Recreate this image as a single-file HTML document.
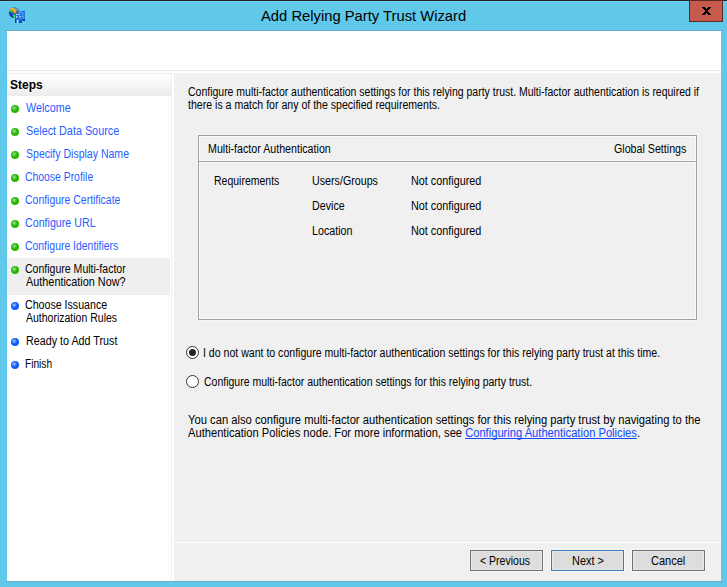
<!DOCTYPE html>
<html><head><meta charset="utf-8">
<style>

html,body{margin:0;padding:0;}
body{width:727px;height:587px;position:relative;overflow:hidden;background:#60c9ea;font-family:"Liberation Sans",sans-serif;}
.abs{position:absolute;}
#topline{left:0;top:0;width:727px;height:1px;background:#2a2222;}
#topline2{left:0;top:1px;width:727px;height:1px;background:#63d4f7;}
#close{left:689px;top:0;width:32px;height:20px;background:#c75a4c;border:1px solid #5c2a24;}
#title{left:0;top:5px;width:727px;text-align:center;font-size:15px;color:#111;letter-spacing:-0.13px;white-space:nowrap;}
#client{left:7px;top:31px;width:714px;height:550px;background:#fff;}
#cborder-t{left:6px;top:30px;width:716px;height:1px;background:#6aa9c6;}
#cborder-b{left:6px;top:581px;width:716px;height:1px;background:#6aadcc;}
#cborder-l{left:6px;top:31px;width:1px;height:550px;background:#57c5eb;}
#cborder-r{left:721px;top:31px;width:1px;height:550px;background:#5ec8ea;}
#hdrline{left:7px;top:70px;width:714px;height:1px;background:#e8e8e8;}
#lefthdr{left:7px;top:73px;width:164px;height:22px;background:linear-gradient(#ffffff,#ececec);border-top:1px solid #ececec;}
#leftline{left:171px;top:73px;width:1px;height:508px;background:#f0f0f0;}
#right{left:174px;top:73px;width:547px;height:508px;background:#f0f0f0;}
.t{position:absolute;white-space:nowrap;font-size:11px;line-height:13px;color:#000;}
.step{position:absolute;left:26px;white-space:nowrap;font-size:11px;line-height:13px;color:#2f5cff;letter-spacing:-0.25px;}
.dot{position:absolute;left:11px;width:8px;height:8px;border-radius:50%;}
.g{background:radial-gradient(circle at 40% 38%,#a8e2a0 0,#5ccc40 22%,#22ae00 48%,#2cc000 70%,#4ada00 100%);}
.b{background:radial-gradient(circle at 40% 38%,#b0d4ff 0,#4a8cff 22%,#0a50f0 48%,#1262ff 70%,#2a78ff 100%);}
#hl{left:7px;top:258px;width:163px;height:37px;background:#efefef;}
#box{left:198px;top:135px;width:497px;height:183px;border:1px solid #a0a0a0;box-shadow:inset 1px 1px 0 #fafafa, inset -1px -1px 0 #fafafa, 0 0 0 1px #f6f6f6;}
#boxsep{left:199px;top:161px;width:497px;height:1px;background:#a0a0a0;box-shadow:0 -1px 0 #fafafa, 0 1px 0 #fafafa;}
.radio{position:absolute;left:186px;width:11px;height:11px;border:1px solid #333;border-radius:50%;background:#fff;}
.radio.on::after{content:"";position:absolute;left:2px;top:2px;width:7px;height:7px;border-radius:50%;background:#222;}
#sep{left:174px;top:542px;width:547px;height:1px;background:#fff;}
.btn{position:absolute;top:550px;width:71px;height:19px;border:1px solid #707070;background:#dddddd;box-shadow:inset 0 0 0 1px #e9e9e9, 0 0 0 1px #f8f8f8;}
a{color:#1448ff;text-decoration:underline;text-decoration-skip-ink:none;}

.tx{position:absolute;white-space:nowrap;}

</style></head><body>

<div class="abs" id="topline"></div>
<div class="abs" id="topline2"></div>
<div class="abs" id="close"></div>
<svg class="abs" style="left:689px;top:0" width="34" height="22" shape-rendering="crispEdges"><g fill="#000">
<rect x="13" y="7" width="3" height="1"/><rect x="19" y="7" width="3" height="1"/>
<rect x="14" y="8" width="3" height="1"/><rect x="18" y="8" width="3" height="1"/>
<rect x="15" y="9" width="5" height="1"/>
<rect x="16" y="10" width="3" height="2"/>
<rect x="15" y="12" width="5" height="1"/>
<rect x="14" y="13" width="3" height="1"/><rect x="18" y="13" width="3" height="1"/>
<rect x="13" y="14" width="3" height="1"/><rect x="19" y="14" width="3" height="1"/>
</g></svg>
<svg class="abs" style="left:6px;top:4px" width="24" height="22">
<defs><radialGradient id="gl" cx="0.35" cy="0.6" r="0.7"><stop offset="0" stop-color="#1a5ad0"/><stop offset="0.6" stop-color="#0a2a9a"/><stop offset="1" stop-color="#2a80d8"/></radialGradient></defs>
<circle cx="8.3" cy="8.6" r="5.4" fill="url(#gl)"/>
<path d="M7.5 3.4 Q11.5 3.6 13 7 L12 8 Q10.5 5 7.5 4.6 Z" fill="#3aa8e8"/>
<path d="M3 5.8 Q4.5 3.6 7.5 3.9 L9.2 5.2 L10.6 5 L10.5 9.3 L6.8 9 L8 7.9 Q6.5 6.6 4.2 7.8 L3.1 7.4 Z" fill="#f4a418"/><path d="M5 5 Q7 4.6 8.8 6.2" stroke="#ffd890" stroke-width="0.7" fill="none"/>
<path d="M4.3 5.8 L6.4 5.6 L6.4 8.6 L4.5 8.4 Z" fill="#20d030"/>
<path d="M6.6 10.2 L9.4 10.4 L9.4 13.9 L7.5 13.6 Z" fill="#20e040"/>
<rect x="12" y="6.9" width="6.9" height="10" fill="#1a6ed8"/>
<rect x="12.6" y="7.6" width="1.2" height="0.9" fill="#d8ecff"/><rect x="14.6" y="7.6" width="1.6" height="0.9" fill="#c8e0ff"/>
<rect x="16.5" y="9.2" width="1" height="1.2" fill="#d8ecff"/><rect x="16.5" y="11.6" width="1" height="1.2" fill="#c8e0ff"/><rect x="16.5" y="13.6" width="1" height="1" fill="#d8ecff"/>
<rect x="16.7" y="15" width="2.1" height="1.9" fill="#0030a8"/>
<rect x="9" y="9.2" width="6.9" height="9.5" fill="#1c7ae2"/>
<rect x="10.1" y="9.8" width="1.2" height="1.1" fill="#f0f8ff"/><rect x="12.4" y="9.8" width="1.5" height="1.1" fill="#e0f0ff"/>
<rect x="10.1" y="12" width="1.2" height="1.5" fill="#f0f8ff"/><rect x="13.5" y="12" width="1.2" height="1.5" fill="#d0e8ff"/>
<rect x="9" y="15" width="1.1" height="3.7" fill="#0030a8"/>
<rect x="10.9" y="16.1" width="1.5" height="2.6" fill="#d8ecff"/>
<rect x="13.1" y="16.9" width="2.7" height="1.8" fill="#0030a8"/>
</svg>
<div class="abs" id="cborder-t"></div>
<div class="abs" id="cborder-b"></div>
<div class="abs" id="cborder-l"></div>
<div class="abs" id="cborder-r"></div>
<div class="abs" id="client"></div>
<div class="abs" id="hdrline"></div>
<div class="abs" id="lefthdr"></div>
<div class="abs" id="leftline"></div>
<div class="abs" id="right"></div>
<div class="abs" id="hl"></div>

<div class="dot g" style="top:105px"></div>
<div class="dot g" style="top:128px"></div>
<div class="dot g" style="top:151px"></div>
<div class="dot g" style="top:174px"></div>
<div class="dot g" style="top:197px"></div>
<div class="dot g" style="top:220px"></div>
<div class="dot g" style="top:243px"></div>
<div class="dot g" style="top:266px"></div>
<div class="dot b" style="top:302px"></div>
<div class="dot b" style="top:338px"></div>
<div class="dot b" style="top:361px"></div>


<div class="abs" id="box"></div>
<div class="abs" id="boxsep"></div>

<div class="radio on" style="top:346px"></div>
<div class="radio" style="top:375px"></div>


<div class="abs" id="sep"></div>
<div class="btn" style="left:470px"></div>
<div class="btn" style="left:551px;border-color:#3a7bb8"></div>
<div class="btn" style="left:632px"></div>

<div class="tx" id="t_title" style="left:261.05px;top:7px;font-size:15px;line-height:18px;color:#000;transform:scaleX(0.9847);transform-origin:0 0;">Add Relying Party Trust Wizard</div>
<div class="tx" id="t_steps" style="left:9.85px;top:79px;font-size:12px;line-height:13px;color:#000;font-weight:bold;transform:scaleX(0.9988);transform-origin:0 0;">Steps</div>
<div class="tx" id="t_s1" style="left:26.27px;top:102px;font-size:12px;line-height:13px;color:#1f5eff;transform:scaleX(0.8961);transform-origin:0 0;">Welcome</div>
<div class="tx" id="t_s2" style="left:25.89px;top:125px;font-size:12px;line-height:13px;color:#1f5eff;transform:scaleX(0.9012);transform-origin:0 0;">Select Data Source</div>
<div class="tx" id="t_s3" style="left:25.99px;top:148px;font-size:12px;line-height:13px;color:#1f5eff;transform:scaleX(0.8774);transform-origin:0 0;">Specify Display Name</div>
<div class="tx" id="t_s4" style="left:25.46px;top:171px;font-size:12px;line-height:13px;color:#1f5eff;transform:scaleX(0.8661);transform-origin:0 0;">Choose Profile</div>
<div class="tx" id="t_s5" style="left:25.46px;top:194px;font-size:12px;line-height:13px;color:#1f5eff;transform:scaleX(0.8720);transform-origin:0 0;">Configure Certificate</div>
<div class="tx" id="t_s6" style="left:25.40px;top:217px;font-size:12px;line-height:13px;color:#1f5eff;transform:scaleX(0.8898);transform-origin:0 0;">Configure URL</div>
<div class="tx" id="t_s7" style="left:25.46px;top:240px;font-size:12px;line-height:13px;color:#1f5eff;transform:scaleX(0.8687);transform-origin:0 0;">Configure Identifiers</div>
<div class="tx" id="t_s8a" style="left:25.40px;top:263px;font-size:12px;line-height:13px;color:#000;transform:scaleX(0.8779);transform-origin:0 0;">Configure Multi-factor</div>
<div class="tx" id="t_s8b" style="left:26.01px;top:276px;font-size:12px;line-height:13px;color:#000;transform:scaleX(0.9052);transform-origin:0 0;">Authentication Now?</div>
<div class="tx" id="t_s9a" style="left:25.40px;top:299px;font-size:12px;line-height:13px;color:#000;transform:scaleX(0.8855);transform-origin:0 0;">Choose Issuance</div>
<div class="tx" id="t_s9b" style="left:25.95px;top:312px;font-size:12px;line-height:13px;color:#000;transform:scaleX(0.8751);transform-origin:0 0;">Authorization Rules</div>
<div class="tx" id="t_s10" style="left:25.72px;top:335px;font-size:12px;line-height:13px;color:#000;transform:scaleX(0.8955);transform-origin:0 0;">Ready to Add Trust</div>
<div class="tx" id="t_s11" style="left:25.22px;top:358px;font-size:12px;line-height:13px;color:#000;transform:scaleX(0.8459);transform-origin:0 0;">Finish</div>
<div class="tx" id="t_intro1" style="left:188.26px;top:86px;font-size:12px;line-height:13px;color:#000;transform:scaleX(0.8736);transform-origin:0 0;">Configure multi-factor authentication settings for this relying party trust. Multi-factor authentication is required if</div>
<div class="tx" id="t_intro2" style="left:187.88px;top:99px;font-size:12px;line-height:13px;color:#000;transform:scaleX(0.8808);transform-origin:0 0;">there is a match for any of the specified requirements.</div>
<div class="tx" id="t_mfa" style="left:207.92px;top:143px;font-size:12px;line-height:13px;color:#000;transform:scaleX(0.8890);transform-origin:0 0;">Multi-factor Authentication</div>
<div class="tx" id="t_global" style="left:614.40px;top:143px;font-size:12px;line-height:13px;color:#000;transform:scaleX(0.8890);transform-origin:0 0;">Global Settings</div>
<div class="tx" id="t_req" style="left:213.54px;top:175px;font-size:12px;line-height:13px;color:#000;transform:scaleX(0.8741);transform-origin:0 0;">Requirements</div>
<div class="tx" id="t_users" style="left:311.62px;top:175px;font-size:12px;line-height:13px;color:#000;transform:scaleX(0.8909);transform-origin:0 0;">Users/Groups</div>
<div class="tx" id="t_nc1" style="left:410.51px;top:175px;font-size:12px;line-height:13px;color:#000;transform:scaleX(0.9012);transform-origin:0 0;">Not configured</div>
<div class="tx" id="t_device" style="left:311.52px;top:200px;font-size:12px;line-height:13px;color:#000;transform:scaleX(0.8909);transform-origin:0 0;">Device</div>
<div class="tx" id="t_nc2" style="left:410.51px;top:200px;font-size:12px;line-height:13px;color:#000;transform:scaleX(0.9012);transform-origin:0 0;">Not configured</div>
<div class="tx" id="t_location" style="left:311.52px;top:225px;font-size:12px;line-height:13px;color:#000;transform:scaleX(0.8909);transform-origin:0 0;">Location</div>
<div class="tx" id="t_nc3" style="left:410.51px;top:225px;font-size:12px;line-height:13px;color:#000;transform:scaleX(0.9012);transform-origin:0 0;">Not configured</div>
<div class="tx" id="t_radio1" style="left:203.42px;top:347px;font-size:12px;line-height:13px;color:#000;transform:scaleX(0.8797);transform-origin:0 0;">I do not want to configure multi-factor authentication settings for this relying party trust at this time.</div>
<div class="tx" id="t_radio2" style="left:203.86px;top:376px;font-size:12px;line-height:13px;color:#000;transform:scaleX(0.8740);transform-origin:0 0;">Configure multi-factor authentication settings for this relying party trust.</div>
<div class="tx" id="t_para1" style="left:188.28px;top:414px;font-size:12px;line-height:13px;color:#000;transform:scaleX(0.9344);transform-origin:0 0;">You can also configure multi-factor authentication settings for this relying party trust by navigating to the</div>
<div class="tx" id="t_para2" style="left:188.01px;top:427px;font-size:12px;line-height:13px;color:#000;transform:scaleX(0.9295);transform-origin:0 0;">Authentication Policies node. For more information, see <a>Configuring Authentication Policies</a>.</div>
<div class="tx" id="t_prev" style="left:480.27px;top:555px;font-size:12px;line-height:13px;color:#000;transform:scaleX(0.8777);transform-origin:0 0;">&lt; Previous</div>
<div class="tx" id="t_next" style="left:571.71px;top:555px;font-size:12px;line-height:13px;color:#000;transform:scaleX(0.9119);transform-origin:0 0;">Next &gt;</div>
<div class="tx" id="t_cancel" style="left:651.16px;top:555px;font-size:12px;line-height:13px;color:#000;transform:scaleX(0.9160);transform-origin:0 0;">Cancel</div>
</body></html>
